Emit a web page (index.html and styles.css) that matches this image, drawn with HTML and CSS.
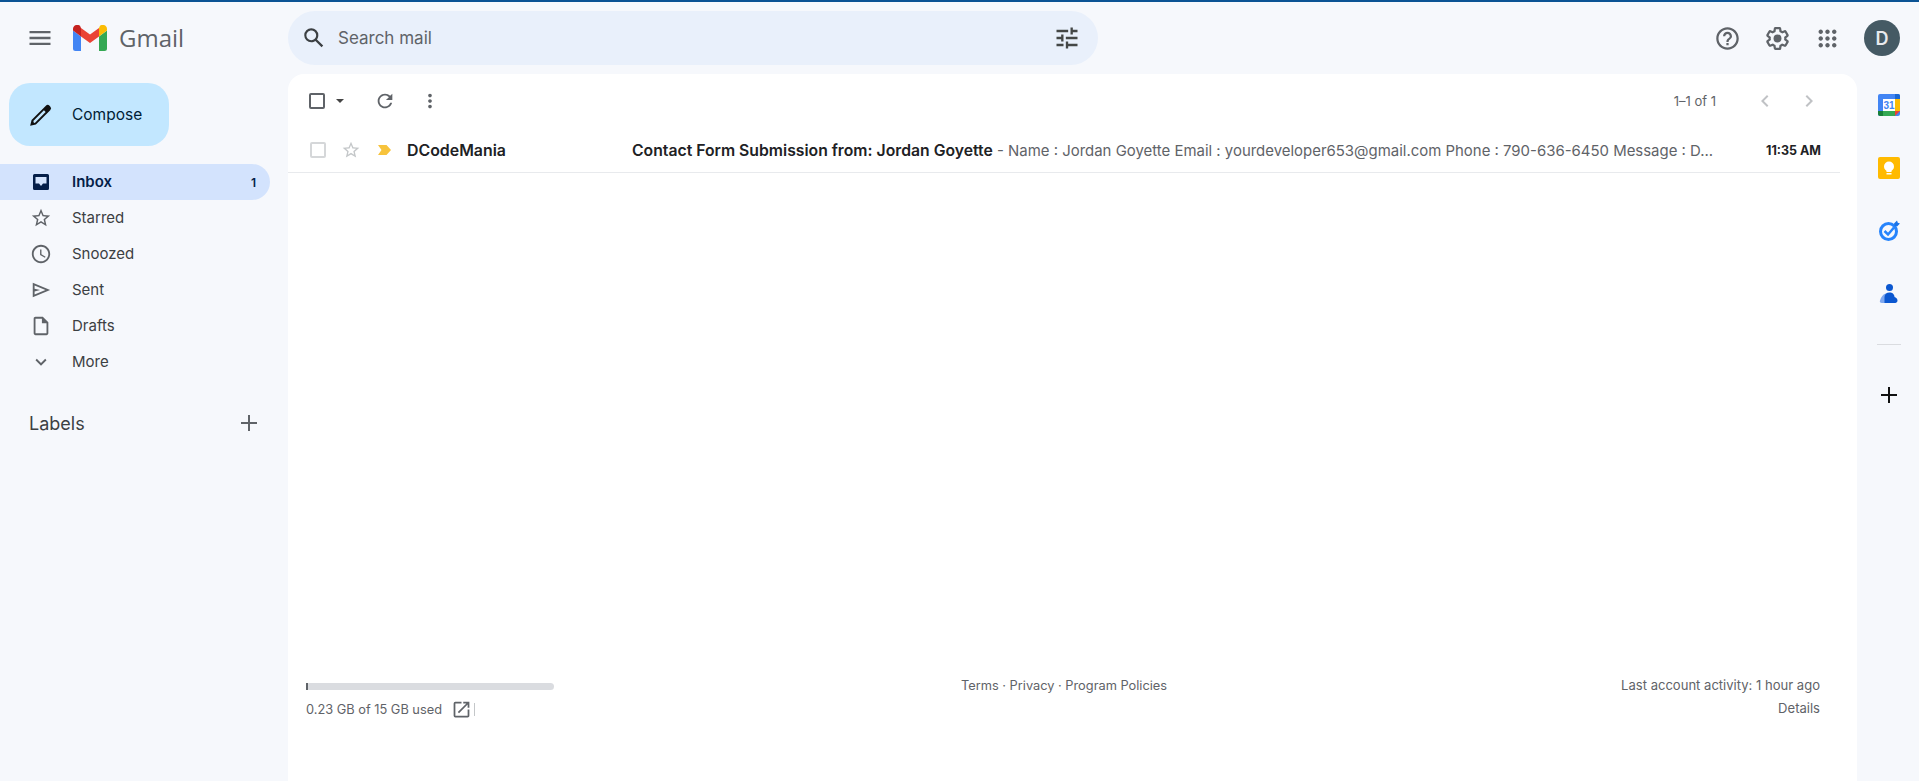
FILE: index.html
```html
<!DOCTYPE html>
<html lang="en">
<head>
<meta charset="utf-8">
<title>Inbox - Gmail</title>
<link rel="stylesheet" href="styles.css">
</head>
<body>
<div class="app">
  <header class="topbar">
    <div class="brand">
      <svg class="menu-icon" viewBox="0 0 24 24"><path d="M3 18h18v-2H3v2zm0-5h18v-2H3v2zm0-7v2h18V6H3z"/></svg>
      <svg class="logo" viewBox="0 0 34 26">
        <path fill="#4285f4" d="M0 3v20.500A2.500 2.500 0 0 0 2.500 26H8V11.500L0 5.500z"/>
        <path fill="#34a853" d="M26 26h5.500a2.500 2.500 0 0 0 2.500-2.500V5.500l-8 6z"/>
        <path fill="#ea4335" d="M8 11.500 17 18l9-6.500V3l-9 6.500L8 3z"/>
        <path fill="#fbbc04" d="M26 3v8.500l8-6V4c0-3.600-4-5.400-7-3.200z"/>
        <path fill="#c5221f" d="M0 5.500l8 6V3L7 .8C4-1.400 0 .4 0 4z"/>
      </svg>
      <span class="wordmark">Gmail</span>
    </div>
    <div class="search">
      <svg class="search-icon" viewBox="0 0 24 24"><path d="M20.490 19l-5.730-5.730C15.530 12.200 16 10.910 16 9.500A6.500 6.500 0 1 0 9.500 16c1.410 0 2.700-.47 3.770-1.240L19 20.490 20.490 19zM5 9.500C5 7.010 7.010 5 9.500 5S14 7.010 14 9.500 11.990 14 9.500 14 5 11.990 5 9.500z"/></svg>
      <span class="search-text">Search mail</span>
      <svg class="tune-icon" viewBox="0 0 24 24"><path d="M3 17v2h6v-2H3zM3 5v2h10V5H3zm10 16v-2h8v-2h-8v-2h-2v6h2zM7 9v2H3v2h4v2h2V9H7zm14 4v-2H11v2h10zm-6-4h2V7h4V5h-4V3h-2v6z"/></svg>
    </div>
    <div class="top-actions">
      <svg class="top-icon" viewBox="0 0 24 24"><path d="M11 18h2v-2h-2v2zm1-16C6.480 2 2 6.480 2 12s4.480 10 10 10 10-4.480 10-10S17.520 2 12 2zm0 18c-4.410 0-8-3.590-8-8s3.590-8 8-8 8 3.590 8 8-3.590 8-8 8zm0-14c-2.210 0-4 1.790-4 4h2c0-1.100.9-2 2-2s2 .9 2 2c0 2-3 1.750-3 5h2c0-2.250 3-2.500 3-5 0-2.210-1.790-4-4-4z"/></svg>
      <svg class="top-icon" viewBox="0 0 24 24"><path d="M13.850 22.250h-3.700c-.74 0-1.360-.54-1.450-1.270l-.27-1.890c-.27-.14-.53-.29-.79-.46l-1.800.72c-.7.260-1.470-.03-1.810-.65L2.200 15.530c-.35-.66-.2-1.440.36-1.880l1.530-1.190c-.01-.15-.02-.3-.02-.46 0-.15.010-.31.020-.46l-1.520-1.190c-.59-.45-.74-1.260-.37-1.880l1.850-3.190c.34-.62 1.110-.9 1.790-.63l1.810.73c.26-.17.520-.32.780-.46l.27-1.910c.09-.7.710-1.260 1.440-1.260h3.700c.74 0 1.360.54 1.450 1.270l.27 1.890c.27.14.53.29.79.46l1.800-.72c.71-.26 1.480.03 1.820.65l1.840 3.180c.36.66.2 1.440-.36 1.880l-1.520 1.190c.01.15.02.3.02.46s-.01.31-.02.46l1.520 1.190c.56.450.72 1.230.37 1.860l-1.860 3.220c-.34.620-1.110.9-1.800.63l-1.800-.72c-.26.170-.52.320-.78.460l-.27 1.910c-.1.680-.72 1.220-1.470 1.220zm-3.260-2h2.820l.37-2.550.53-.22c.44-.18.880-.44 1.340-.78l.45-.34 2.380.96 1.410-2.440-2.030-1.580.07-.56c.03-.26.060-.51.060-.78s-.03-.53-.06-.78l-.07-.56 2.030-1.580-1.420-2.440-2.390.96-.45-.35c-.42-.32-.87-.58-1.330-.77l-.52-.22-.37-2.550h-2.820l-.37 2.550-.53.210c-.44.190-.88.440-1.340.790l-.45.330-2.380-.95-1.420 2.430 2.030 1.580-.07.560a7 7 0 0 0-.06.790c0 .26.020.53.060.78l.07.560-2.030 1.580 1.410 2.440 2.390-.96.450.35c.43.330.86.580 1.330.770l.53.220.38 2.550z"/><circle cx="12" cy="12" r="3.500"/></svg>
      <svg class="top-icon" viewBox="0 0 24 24"><path d="M6 8c1.100 0 2-.9 2-2s-.9-2-2-2-2 .9-2 2 .9 2 2 2zm6 12c1.100 0 2-.9 2-2s-.9-2-2-2-2 .9-2 2 .9 2 2 2zm-6 0c1.100 0 2-.9 2-2s-.9-2-2-2-2 .9-2 2 .9 2 2 2zm0-6c1.100 0 2-.9 2-2s-.9-2-2-2-2 .9-2 2 .9 2 2 2zm6 0c1.100 0 2-.9 2-2s-.9-2-2-2-2 .9-2 2 .9 2 2 2zm4-8c0 1.100.9 2 2 2s2-.9 2-2-.9-2-2-2-2 .9-2 2zm-4 2c1.100 0 2-.9 2-2s-.9-2-2-2-2 .9-2 2 .9 2 2 2zm6 6c1.100 0 2-.9 2-2s-.9-2-2-2-2 .9-2 2 .9 2 2 2zm0 6c1.100 0 2-.9 2-2s-.9-2-2-2-2 .9-2 2 .9 2 2 2z"/></svg>
      <span class="avatar">D</span>
    </div>
  </header>

  <div class="body">
    <nav class="sidebar">
      <button class="compose">
        <svg class="compose-icon" viewBox="0 0 24 24"><path d="M2 22l1.300-5.300L16.500 3.500a2.400 2.400 0 0 1 3.400 0l.6.6a2.400 2.400 0 0 1 0 3.400L7.300 20.700zm3.500-2.600l1-.3L16.300 9.300l-1.600-1.600L4.900 17.500z" fill-rule="evenodd"/></svg>
        <span>Compose</span>
      </button>
      <ul class="nav-list">
        <li class="nav-row nav-active">
          <svg class="nav-icon inbox-icon" viewBox="0 0 16 16"><path fill-rule="evenodd" d="M1.500 0h13A1.500 1.500 0 0 1 16 1.500v13a1.500 1.500 0 0 1-1.500 1.500h-13A1.500 1.500 0 0 1 0 14.500v-13A1.500 1.500 0 0 1 1.500 0zM2.500 3v6.500h3.500L8 12l2-2.500h3.500V3z"/></svg>
          <span class="nav-label">Inbox</span><span class="nav-count">1</span>
        </li>
        <li class="nav-row">
          <svg class="nav-icon" viewBox="0 0 24 24"><path d="M22 9.240l-7.190-.62L12 2 9.190 8.630 2 9.240l5.460 4.730L5.820 21 12 17.270 18.180 21l-1.630-7.030L22 9.240zM12 15.400l-3.760 2.270 1-4.280-3.320-2.880 4.380-.38L12 6.100l1.710 4.040 4.380.38-3.320 2.880 1 4.280L12 15.400z"/></svg>
          <span class="nav-label">Starred</span>
        </li>
        <li class="nav-row">
          <svg class="nav-icon" viewBox="0 0 24 24"><path d="M11.990 2C6.470 2 2 6.480 2 12s4.470 10 9.990 10C17.520 22 22 17.520 22 12S17.520 2 11.990 2zM12 20c-4.420 0-8-3.580-8-8s3.580-8 8-8 8 3.580 8 8-3.580 8-8 8zm.5-13H11v6l5.250 3.150.75-1.230-4.500-2.670z"/></svg>
          <span class="nav-label">Snoozed</span>
        </li>
        <li class="nav-row">
          <svg class="nav-icon" viewBox="0 0 24 24"><path d="M3 20V4l19 8-19 8zm2-3.100L16.850 12 5 7.100v3.400l6 1.500-6 1.500v3.400z"/></svg>
          <span class="nav-label">Sent</span>
        </li>
        <li class="nav-row">
          <svg class="nav-icon" viewBox="0 0 24 24"><path d="M14 2H6c-1.100 0-2 .9-2 2v16c0 1.100.9 2 2 2h12c1.100 0 2-.9 2-2V8l-6-6zM6 20V4h7v5h5v11H6z"/></svg>
          <span class="nav-label">Drafts</span>
        </li>
        <li class="nav-row">
          <svg class="nav-icon" viewBox="0 0 24 24"><path d="M16.590 8.590L12 13.170 7.410 8.590 6 10l6 6 6-6z"/></svg>
          <span class="nav-label">More</span>
        </li>
      </ul>
      <div class="labels">
        <span>Labels</span>
        <svg class="labels-add" viewBox="0 0 24 24"><path d="M20 13h-7v7h-2v-7H4v-2h7V4h2v7h7z"/></svg>
      </div>
    </nav>

    <main class="main">
      <div class="toolbar">
        <div class="tool-left">
          <span class="check-big"></span>
          <span class="caret"></span>
          <svg class="tool-icon refresh" viewBox="0 0 24 24"><path d="M17.650 6.350C16.200 4.900 14.210 4 12 4c-4.420 0-7.990 3.580-7.990 8s3.570 8 7.990 8c3.730 0 6.840-2.550 7.730-6h-2.080c-.82 2.330-3.040 4-5.650 4-3.310 0-6-2.690-6-6s2.690-6 6-6c1.660 0 3.140.69 4.220 1.780L13 11h7V4l-2.350 2.350z"/></svg>
          <svg class="tool-icon dots" viewBox="0 0 24 24"><path d="M12 8c1.100 0 2-.9 2-2s-.9-2-2-2-2 .9-2 2 .9 2 2 2zm0 2c-1.100 0-2 .9-2 2s.9 2 2 2 2-.9 2-2-.9-2-2-2zm0 6c-1.100 0-2 .9-2 2s.9 2 2 2 2-.9 2-2-.9-2-2-2z"/></svg>
        </div>
        <div class="tool-right">
          <span class="pager">1–1 of 1</span>
          <svg class="chev" viewBox="0 0 24 24"><path d="M15.410 7.410L14 6l-6 6 6 6 1.410-1.410L10.830 12z"/></svg>
          <svg class="chev" viewBox="0 0 24 24"><path d="M10 6L8.590 7.410 13.170 12l-4.580 4.590L10 18l6-6z"/></svg>
        </div>
      </div>

      <div class="mail-row">
        <span class="check-small"></span>
        <svg class="row-star" viewBox="0 0 24 24"><path d="M22 9.240l-7.190-.62L12 2 9.190 8.630 2 9.240l5.460 4.730L5.820 21 12 17.270 18.180 21l-1.630-7.030L22 9.240zM12 15.400l-3.760 2.270 1-4.280-3.320-2.880 4.380-.38L12 6.100l1.710 4.040 4.380.38-3.320 2.880 1 4.280L12 15.400z"/></svg>
        <svg class="row-imp" viewBox="0 0 15 12"><path d="M1 1h8.500L14 6l-4.500 5H1l3.500-5z"/></svg>
        <span class="sender">DCodeMania</span>
        <span class="message"><b>Contact Form Submission from: Jordan Goyette</b><span class="snippet"> - Name : Jordan Goyette Email : yourdeveloper653@gmail.com Phone : 790-636-6450 Message : D...</span></span>
        <span class="time">11:35 AM</span>
      </div>

      <footer class="footer">
        <div class="foot-col">
          <div class="storage"><div class="storage-fill"></div></div>
          <div class="storage-line">
            <span>0.23 GB of 15 GB used</span>
            <svg class="open-icon" viewBox="0 0 24 24"><path d="M19 19H5V5h7V3H5a2 2 0 0 0-2 2v14a2 2 0 0 0 2 2h14c1.100 0 2-.9 2-2v-7h-2v7zM14 3v2h3.590l-9.830 9.830 1.410 1.410L19 6.410V10h2V3h-7z"/></svg>
            <span class="tick"></span>
          </div>
        </div>
        <div class="foot-center">Terms · Privacy · Program Policies</div>
        <div class="foot-right">
          <div>Last account activity: 1 hour ago</div>
          <div>Details</div>
        </div>
      </footer>
    </main>

    <aside class="rail">
      <svg class="rail-icon" viewBox="0 0 22 22">
        <rect x="0" y="0" width="22" height="22" rx="2" fill="#4285f4"/>
        <rect x="5" y="5" width="12" height="12" fill="#fff"/>
        <path fill="#fbbc04" d="M17 5h5v12h-5z"/>
        <path fill="#34a853" d="M5 17h12v5H5z"/>
        <path fill="#188038" d="M0 17h5v5H2a2 2 0 0 1-2-2z"/>
        <path fill="#1967d2" d="M17 0h3a2 2 0 0 1 2 2v3h-5z"/>
        <path fill="#ea4335" d="M17 22v-5h5z"/>
        <text x="11" y="15" class="cal-text">31</text>
      </svg>
      <svg class="rail-icon" viewBox="0 0 22 22">
        <rect width="22" height="22" rx="2" fill="#ffba00"/>
        <circle cx="11" cy="9.500" r="5" fill="#fff"/>
        <rect x="8.500" y="13" width="5" height="2" fill="#fff"/>
        <rect x="8.500" y="16" width="5" height="1.500" fill="#fff"/>
      </svg>
      <svg class="rail-icon" viewBox="0 0 22 22">
        <circle cx="10.500" cy="11.500" r="8" fill="none" stroke="#2684fc" stroke-width="3"/>
        <path fill="none" stroke="#2684fc" stroke-width="2.500" d="M6.500 11l3.500 3.500 6-7"/>
        <path fill="#1a73e8" d="M16 3.500l3-3 .8 2.200 2.200.8-3 3-2.500-.5z"/>
      </svg>
      <svg class="rail-icon" viewBox="0 0 22 22">
        <circle cx="11.500" cy="4.500" r="3.500" fill="#0b57d0"/>
        <path fill="#7ea8f0" d="M4 20c-2 0-2.500-1-2-2.500C3 14 5 11 8 10.500h7V20z"/>
        <path fill="#0b57d0" d="M6.500 20v-6c0-2.500 2-4.500 5-4.500s5 2 5 4.500c1.500.5 3 1.500 3 3.500S18 20 16 20z"/>
      </svg>
      <span class="rail-sep"></span>
      <svg class="rail-add" viewBox="0 0 24 24"><path d="M20 13h-7v7h-2v-7H4v-2h7V4h2v7h7z"/></svg>
    </aside>
  </div>
</div>
</body>
</html>
```

FILE: styles.css
```css
* { box-sizing: border-box; }
html, body { margin: 0; height: 100%; overflow: hidden; }
body { background: #f6f8fc; font-family: Inter, Roboto, "Liberation Sans", sans-serif; color: #202124; }
.app { height: 781px; display: flex; flex-direction: column; border-top: 2px solid #0b5394; }
.topbar { height: 72px; flex: none; display: flex; align-items: flex-start; }
.brand { width: 288px; flex: none; display: flex; align-items: center; height: 72px; padding-left: 26px; }
.menu-icon { width: 28px; height: 28px; fill: #5f6368; flex: none; margin-right: 19px; }
.logo { width: 34px; height: 26px; flex: none; margin-right: 12px; }
.wordmark { font-size: 24px; color: #5f6368; font-family: "Open Sans", sans-serif; padding-bottom: 1px; }
.search { width: 810px; height: 54px; margin-top: 9px; background: #e9f0fb; border-radius: 27px; display: flex; align-items: center; padding: 0 17px 0 13px; }
.search-icon { width: 26px; height: 26px; fill: #3c4043; flex: none; }
.search-text { margin-left: 11px; font-size: 17px; color: #5f6368; flex: 1; }
.tune-icon { width: 28px; height: 28px; fill: #444746; flex: none; }
.top-actions { flex: 1; display: flex; justify-content: flex-end; align-items: center; height: 54px; margin-top: 9px; padding-right: 19px; }
.top-icon { width: 27px; height: 27px; fill: #5f6368; flex: none; margin-right: 23px; }
.avatar { width: 36px; height: 36px; border-radius: 50%; background: #455a64; color: #e8eaed; font-size: 18px; font-weight: 600; display: flex; align-items: center; justify-content: center; }

.body { flex: 1; display: flex; min-height: 0; }
.sidebar { width: 288px; flex: none; }
.compose { width: 160px; height: 63px; margin: 9px 0 0 9px; display: flex; align-items: center; background: #c2e7ff; border: 0; border-radius: 21px; padding: 0 0 0 19px; color: #001d35; font: 15.500px Inter, sans-serif; }
.compose-icon { width: 26px; height: 26px; fill: #111; margin-right: 18px; flex: none; }
.nav-list { list-style: none; margin: 18px 0 0; padding: 0; width: 270px; }
.nav-row { height: 36px; display: flex; align-items: center; padding: 0 14px 0 30px; font-size: 15px; color: #3c4043; }
.nav-label { flex: 1; padding-bottom: 2px; }
.nav-active { background: #d3e3fd; border-radius: 0 18px 18px 0; color: #041e49; font-weight: 600; }
.nav-icon { width: 22px; height: 22px; fill: #5f6368; flex: none; margin-right: 20px; margin-top: -1px; }
.inbox-icon { width: 16px; height: 16px; fill: #041e49; margin: 0 23px 0 3px; }
.nav-count { font-size: 12px; }
.labels { display: flex; align-items: center; justify-content: space-between; width: 232px; margin: 31px 0 0 29px; font-size: 18px; color: #3c4043; }
.labels-add { width: 24px; height: 24px; fill: #5f6368; }

.main { flex: 1; background: #fff; border-radius: 16px 16px 0 0; display: flex; flex-direction: column; min-width: 0; }
.toolbar { height: 52px; flex: none; display: flex; justify-content: space-between; align-items: center; padding: 2px 36px 0 21px; }
.tool-left, .tool-right { display: flex; align-items: center; }
.check-big { width: 16px; height: 16px; border: 2px solid #5f6368; border-radius: 2px; }
.caret { width: 0; height: 0; border: 4.500px solid transparent; border-top: 4.500px solid #444; border-bottom: 0; margin-left: 11px; }
.tool-icon { width: 22px; height: 22px; fill: #5f6368; flex: none; }
.refresh { margin-left: 30px; }
.dots { margin-left: 23px; }
.pager { font-size: 13px; color: #5f6368; margin-right: 37px; }
.chev { width: 24px; height: 24px; fill: #c0c2c5; margin-left: 20px; }
.chev:first-of-type { margin-left: 0; }
.mail-row { height: 47px; flex: none; margin-right: 17px; border-bottom: 1px solid #e8eaed; display: flex; align-items: center; padding: 2px 19px 0 22px; font-size: 14.950px; }
.check-small { width: 16px; height: 16px; border: 2px solid #d5d7d9; border-radius: 2px; flex: none; }
.row-star { width: 20px; height: 20px; fill: #c4c7c9; margin-left: 15px; flex: none; }
.row-imp { width: 15px; height: 12px; fill: #f7c33c; margin-left: 16px; flex: none; }
.sender { width: 225px; margin-left: 15px; font-weight: 600; font-size: 15.900px; flex: none; }
.message { flex: 1; min-width: 0; white-space: nowrap; overflow: hidden; }
.message b { font-weight: 600; font-size: 15.750px; }
.snippet { color: #5f6368; }
.time { font-size: 12.500px; font-weight: 700; flex: none; margin-left: 20px; }
.footer { margin-top: auto; height: 111px; flex: none; padding: 6px 37px 0 18px; display: flex; align-items: flex-start; font-size: 12.800px; color: #5f6368; margin-bottom: 2px; }
.foot-col { width: 248px; flex: none; }
.storage { height: 7px; background: #dadce0; border-radius: 4px; margin-bottom: 9px; margin-top: 9px; }
.storage-fill { width: 2px; height: 7px; background: #5f6368; }
.storage-line { display: flex; align-items: center; }
.open-icon { width: 21px; height: 21px; fill: #5f6368; margin-left: 9px; }
.tick { width: 1px; height: 13px; background: #c4c7c9; margin-left: 2px; }
.foot-center { line-height: 23px; margin-left: 407px; }
.foot-right { text-align: right; line-height: 23px; margin-left: auto; font-size: 13.050px; }

.rail { width: 62px; flex: none; display: flex; flex-direction: column; align-items: center; padding-top: 20px; padding-left: 2px; }
.rail-icon { width: 22px; height: 22px; margin-bottom: 41px; }
.cal-text { font: 700 10px "Liberation Sans", sans-serif; fill: #4285f4; text-anchor: middle; }
.rail-sep { width: 24px; height: 1px; background: #dadce0; margin-top: -2px; }
.rail-add { width: 24px; height: 24px; fill: #111; margin-top: 38px; }
```
